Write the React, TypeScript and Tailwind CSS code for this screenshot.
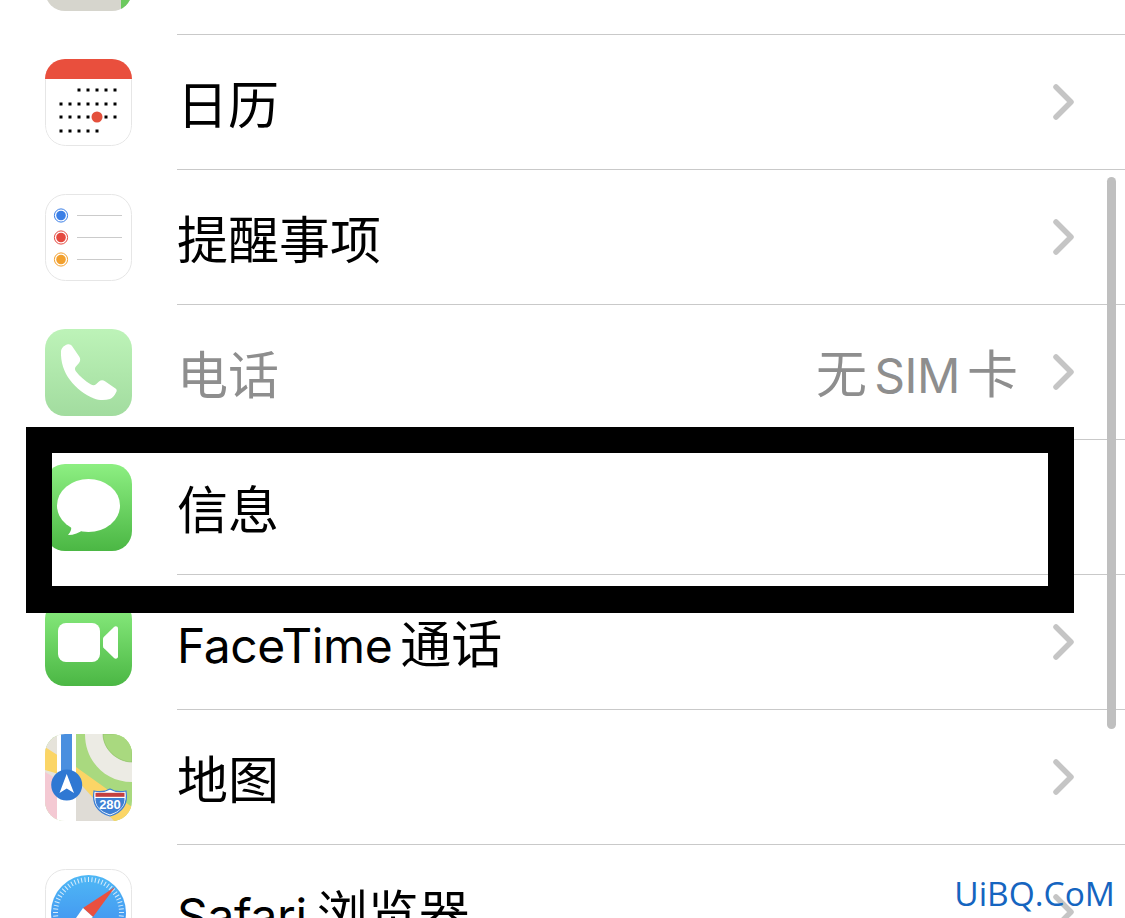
import React from "react";

const font = { fontFamily: '"Noto Sans CJK SC","Inter",sans-serif' };

function Frame({ children, border }: { children?: React.ReactNode; border?: boolean }) {
  return (
    <svg width="87" height="87" viewBox="0 0 87 87" className="block">
      <defs>
        <clipPath id="sq"><rect x="0" y="0" width="87" height="87" rx="20" /></clipPath>
        <linearGradient id="ph" x1="0" y1="0" x2="0" y2="1"><stop offset="0" stopColor="#bdf3b8" /><stop offset="1" stopColor="#a2dc9f" /></linearGradient>
        <linearGradient id="gr" x1="0" y1="0" x2="0" y2="1"><stop offset="0" stopColor="#8def82" /><stop offset="1" stopColor="#4bb744" /></linearGradient>
        <linearGradient id="sf" x1="0" y1="0" x2="0" y2="1"><stop offset="0" stopColor="#4fb8f5" /><stop offset="1" stopColor="#3d86ef" /></linearGradient>
      </defs>
      <g clipPath="url(#sq)">{children}</g>
      {border && <rect x="0.5" y="0.5" width="86" height="86" rx="20" fill="none" stroke="#e6e6e6" />}
    </svg>
  );
}

function Settings() {
  return (
    <Frame>
      <rect width="87" height="87" fill="#d6d5cd" />
      <rect x="76" width="11" height="87" fill="#6cc95f" />
    </Frame>
  );
}

function Calendar() {
  const xs = [16, 25, 34, 43, 52, 61, 70];
  const rows: [number, number[]][] = [
    [31, xs.slice(2)],
    [45, xs],
    [58, xs],
    [72, xs.slice(0, 5)],
  ];
  return (
    <Frame>
      <rect width="87" height="87" fill="#fff" />
      <rect x="0.5" y="0.5" width="86" height="86" rx="20" fill="none" stroke="#e6e6e6" />
      <rect width="87" height="20" fill="#e94f3d" />
      {rows.map(([y, r]) => r.map((x) => <rect key={`${x}-${y}`} x={x - 1.5} y={y - 1.5} width="3" height="3" fill="#000" />))}
      <circle cx="52" cy="58" r="5.5" fill="#e4503c" />
    </Frame>
  );
}

function Reminders() {
  const items: [number, string][] = [[21.5, "#3b7fe6"], [43.5, "#e5493f"], [65.5, "#f2a02e"]];
  return (
    <Frame border>
      <rect width="87" height="87" fill="#fff" />
      {items.map(([y, c]) => (
        <g key={y}>
          <circle cx="16" cy={y} r="6.6" fill="none" stroke={c} strokeWidth="1" />
          <circle cx="16" cy={y} r="4.8" fill={c} />
          <line x1="32" x2="77" y1={y} y2={y} stroke="#cbcbcb" strokeWidth="1" />
        </g>
      ))}
    </Frame>
  );
}

function Phone() {
  return (
    <Frame>
      <rect width="87" height="87" fill="url(#ph)" />
      <path d="M16 22C17 18 20 16 23 15.300C25 15 26 16 27 17L34.500 28C35.500 30 35.500 32 34 34L30.500 38C29.500 39.500 30 41 31 42.500C35 47.500 40 52 46 55.500C48 56.500 49.500 56.500 51 55.300L54 52.500C56 51 58 51 60 52.300L70.500 59.500C72 60.500 72 62 71 63.500C69.500 66.500 67.500 69 65 70C60 71.500 54 71.500 49 69.500C40 66 31 59 25 51C19 43 15.500 33 16 22z" fill="#fff" />
    </Frame>
  );
}

function Messages() {
  return (
    <Frame>
      <rect width="87" height="87" fill="url(#gr)" />
      <ellipse cx="43.500" cy="41.500" rx="31.500" ry="26.500" fill="#fff" />
      <path d="M26 60C27 64 26 68 23 71C29 71 34 69 39 65z" fill="#fff" />
    </Frame>
  );
}

function FaceTimeIcon() {
  return (
    <Frame>
      <rect width="87" height="87" fill="url(#gr)" />
      <rect x="13" y="24" width="42" height="39" rx="8" fill="#fff" />
      <path d="M58 40c0-1 .4-1.700 1-2.300l10-9.700c1.500-1.300 4-.6 4 1.500v28c0 2.100-2.500 2.800-4 1.500l-10-9.700c-.6-.6-1-1.300-1-2.300z" fill="#fff" />
    </Frame>
  );
}

function Maps() {
  return (
    <Frame>
      <rect width="87" height="87" fill="#a9d97f" />
      <rect x="0" y="0" width="31" height="87" fill="#e6e3da" />
      <path d="M0 13L31 33 87 73V87H68L31 45 0 36z" fill="#fbd566" />
      <path d="M31 45L69 87H31z" fill="#dfdcd6" />
      <path d="M0 38L12 45V87H0z" fill="#f4c9d3" />
      <path d="M40 0C40 27 60 48 87 48V28C72 28 58 15 58 0z" fill="#ecebe4" />
      <path d="M58 0C58 15 72 28 87 28V0z" fill="#a9d97f" stroke="#8fc06a" strokeWidth="0.6" />
      <rect x="12" y="0" width="19" height="87" fill="#fff" />
      <rect x="16" y="0" width="11" height="45" fill="#4a8fdf" />
      <circle cx="21.700" cy="51" r="15.500" fill="#2f78d3" />
      <path d="M21.700 40L29 59 21.700 54.500 14.500 59z" fill="#fff" />
      <path d="M49 57C54 58 60 58 65 55C70 58 76 58 81 57C83 69 78 78 65 82C52 78 47 69 49 57z" fill="#fff" stroke="#3d7fd4" strokeWidth="1.200" />
      <rect x="50.500" y="58.800" width="29" height="4" fill="#c33f3f" />
      <path d="M50.500 64H79.500C80 71 76 77 65 80.500C54 77 50 71 50.500 64z" fill="#3d7fd4" />
      <text x="65" y="75" textAnchor="middle" fontSize="13" fontWeight="700" fill="#fff" fontFamily="Liberation Sans, sans-serif">280</text>
    </Frame>
  );
}

function Safari() {
  const ticks = Array.from({ length: 60 }, (_, i) => i * 6);
  return (
    <Frame border>
      <rect width="87" height="87" fill="#fff" />
      <circle cx="43.500" cy="43.500" r="37.500" fill="url(#sf)" />
      {ticks.map((a) => (
        <line key={a} x1="43.500" x2="43.500" y1="8" y2="13" stroke="#d8ecfb" strokeWidth="1" transform={`rotate(${a} 43.500 43.500)`} />
      ))}
      <path d="M70 18L38 39 48 48z" fill="#e9503f" />
      <path d="M17 69L38 39 48 48z" fill="#fff" />
    </Frame>
  );
}

function Chevron() {
  return (
    <svg width="21" height="36" viewBox="0 0 21 36" className="block shrink-0">
      <path d="M3 3L18 18 3 33" fill="none" stroke="#c5c5c5" strokeWidth="5.500" strokeLinecap="round" strokeLinejoin="round" />
    </svg>
  );
}

function Latin({ children }: { children: React.ReactNode }) {
  return <span className="font-['Inter'] text-[48px] tracking-[-0.4px]">{children}</span>;
}

const rows: { icon: React.ReactNode; label?: React.ReactNode; value?: boolean; dim?: boolean }[] = [
  { icon: <Settings /> },
  { icon: <Calendar />, label: "日历" },
  { icon: <Reminders />, label: "提醒事项" },
  { icon: <Phone />, label: "电话", value: true, dim: true },
  { icon: <Messages />, label: "信息" },
  { icon: <FaceTimeIcon />, label: <><Latin>FaceTime</Latin><span className="ml-[8px]">通话</span></> },
  { icon: <Maps />, label: "地图" },
  { icon: <Safari />, label: <><Latin>Safari</Latin><span className="ml-[10px]">浏览器</span></> },
];

export default function App() {
  return (
    <div className="relative h-[918px] w-[1125px] overflow-hidden bg-white" style={font}>
      <div className="-mt-[100px] flex flex-col">
        {rows.map((r, i) => (
          <div key={i} className="flex h-[135px] items-center pl-[45px]">
            <div className="h-[87px] w-[87px] shrink-0">{r.icon}</div>
            <div className="ml-[45px] flex h-[135px] flex-1 items-center border-b border-[#c9c9c9] pr-[51px]">
              <span className={`mt-px flex-1 whitespace-nowrap text-[51px] leading-none ${r.dim ? "text-[#8e8e8e]" : "text-black"}`}>
                {r.label}
              </span>
              {r.value && (
                <span className="mr-[35px] mt-px whitespace-nowrap text-[51px] leading-none text-[#8e8e8e]">
                  无<span className="mx-[7px]"><Latin>SIM</Latin></span>卡
                </span>
              )}
              {r.label && <Chevron />}
            </div>
          </div>
        ))}
      </div>

      <div className="absolute left-[1107px] top-[177px] h-[552px] w-[9px] rounded-full bg-[#bfbfbf]" />

      <div className="absolute left-[26px] top-[427px] h-[186px] w-[1048px] border-x-[26px] border-b-[27px] border-t-[26px] border-black" />

      <div className="absolute right-[10px] top-[874px] whitespace-nowrap text-[33.5px] leading-[38px] text-[#1565c0]" style={{ fontFamily: '"Open Sans",sans-serif' }}>
        UiBQ.CoM
      </div>
    </div>
  );
}
